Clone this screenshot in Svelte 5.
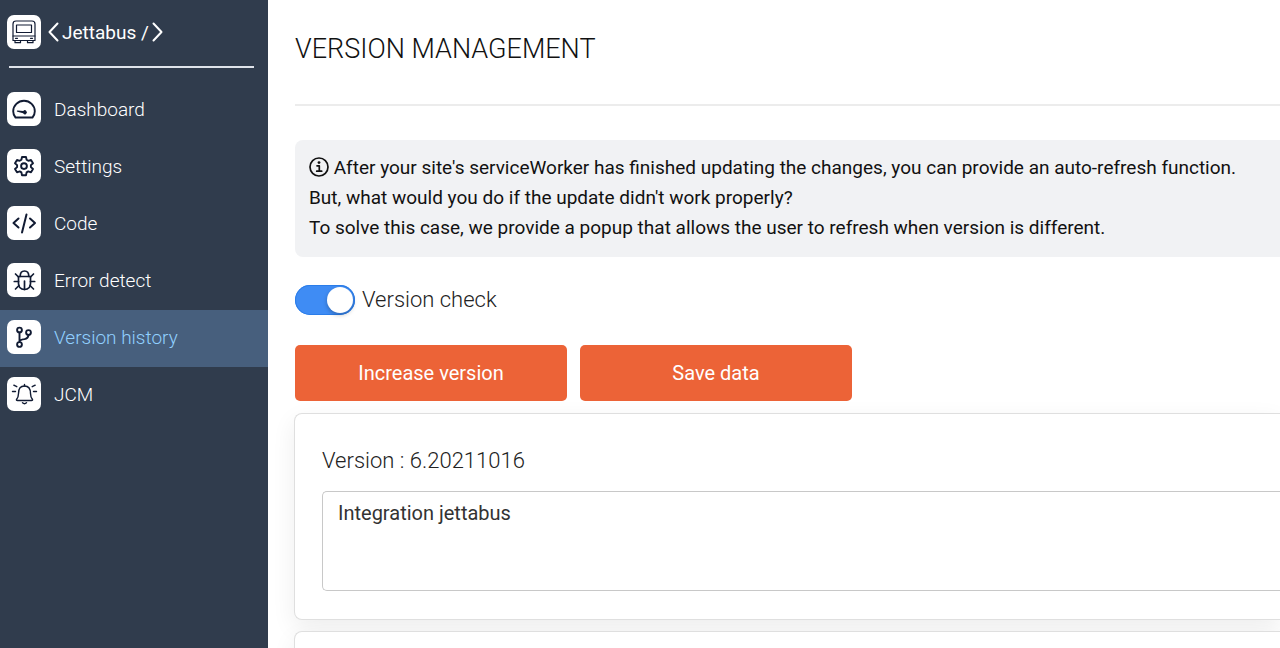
<script lang="ts">
  type Icon = 'dashboard' | 'settings' | 'code' | 'bug' | 'branch' | 'bell';

  interface MenuItem {
    icon: Icon;
    label: string;
    href: string;
  }

  interface Version {
    name: string;
    memo: string;
  }

  const menu: MenuItem[] = [
    { icon: 'dashboard', label: 'Dashboard', href: '#dashboard' },
    { icon: 'settings', label: 'Settings', href: '#settings' },
    { icon: 'code', label: 'Code', href: '#code' },
    { icon: 'bug', label: 'Error detect', href: '#error' },
    { icon: 'branch', label: 'Version history', href: '#version' },
    { icon: 'bell', label: 'JCM', href: '#jcm' },
  ];

  let current = $state('#version');
  let versionCheck = $state(true);
  let versions = $state<Version[]>([{ name: '6.20211016', memo: 'Integration jettabus' }]);

  function increaseVersion() {
    const [major, date] = versions[0].name.split('.');
    versions.unshift({ name: `${Number(major) + 1}.${date}`, memo: '' });
  }

  function saveData() {
    localStorage.setItem('versions', JSON.stringify(versions));
  }
</script>

<div class="layout">
  <aside class="sidebar">
    <div class="brand">
      <span class="tile">
        <svg viewBox="0 0 34 34">
          <g stroke-width="1.2">
            <path d="M6 25.500V9q0-3 3-3h16q3 0 3 3v16.500z" />
            <rect x="9.500" y="10" width="15" height="7.500" />
            <path d="M6 21h22M8 25.500v2.200h5.500v-2.200M20.500 25.500v2.200H26v-2.200M8.500 23.300h2M23.500 23.300h2" />
          </g>
        </svg>
      </span>
      <span class="brand-name">
        <svg class="angle" viewBox="0 0 11 20"><path d="M9.500 1.500 1.500 10l8 8.500" /></svg>
        <span>Jettabus /</span>
        <svg class="angle" viewBox="0 0 11 20"><path d="M1.500 1.500 9.500 10l-8 8.500" /></svg>
      </span>
    </div>

    <nav>
      {#each menu as item}
        <a
          href={item.href}
          class:active={current === item.href}
          onclick={() => (current = item.href)}
        >
          <span class="tile">
            <svg viewBox="0 0 34 34">
              {#if item.icon === 'dashboard'}
                <path stroke-width="1.900" d="M8.500 25.500h17q2.300-2.500 2.300-6.200a10.800 10.500 0 0 0-21.600 0q0 3.700 2.300 6.200z" />
                <path class="solid" d="m10.500 18.400 5.800.6a2 2 0 1 1-.2 2.300l-5.600-1.500a.7.700 0 0 1 0-1.400z" />
              {:else if item.icon === 'settings'}
                <path
                  stroke-width="1.900"
                  d="M15 8h4l.6 2.800 1.700 1 2.700-.9 2 3.300-2.100 1.900v2l2.100 1.900-2 3.300-2.700-.9-1.700 1L19 26.200h-4l-.6-2.800-1.700-1-2.700.9-2-3.300 2.100-1.900v-2L8 14.200l2-3.300 2.700.9 1.700-1z"
                />
                <circle stroke-width="1.900" cx="17" cy="17.100" r="2.900" />
              {:else if item.icon === 'code'}
                <path stroke-width="2" d="m11.500 12.500-5 4.500 5 4.500M23 12.500l5 4.500-5 4.500M19.500 8.500l-4.500 18" />
              {:else if item.icon === 'bug'}
                <g stroke-width="1.700">
                  <path d="M11.500 13.500h12v7q0 5.500-6 6-6-.5-6-6z" />
                  <path d="M13.200 13.300q0-5.300 4.300-5.300t4.300 5.300M17.500 18v8.500" />
                  <path d="m11.500 14-3-3M23.500 14l3-3M11.500 18.500H7.300M23.500 18.500h4.200M12 22.500l-3.500 3.500M23 22.500l3.500 3.500" />
                </g>
              {:else if item.icon === 'branch'}
                <g stroke-width="1.900">
                  <circle cx="12.500" cy="10" r="2.400" />
                  <circle cx="21.500" cy="12.500" r="2.400" />
                  <circle cx="12.500" cy="24.500" r="2.400" />
                  <path d="M12.500 12.400v9.700M21.500 14.900q-.3 3.600-4 4.200-5 .3-5 3" />
                </g>
              {:else}
                <g stroke-width="1.400">
                  <path d="M9.500 22.500q2-2.500 2-6 0-7.500 6-7.500t6 7.500q0 3.500 2 6 .4 1-1 1H10.500q-1.400 0-1-1z" />
                  <path d="M17.500 9V7.500M15.500 25.800q2 1.800 4 0M5.500 14.500h3M26.500 14.500h3M6.800 8.200l3 1.500M28.200 8.200l-3 1.500" />
                </g>
              {/if}
            </svg>
          </span>
          {item.label}
        </a>
      {/each}
    </nav>
  </aside>

  <main>
    <h1>VERSION MANAGEMENT</h1>

    <p class="notice">
      <svg class="info" viewBox="0 0 20 20">
        <circle cx="10" cy="10" r="9" />
        <path d="M8 8.800h2.300v5.200M7.700 14.200h5" />
        <circle class="dot" cx="10" cy="5.600" r="1.400" />
      </svg>
      After your site's serviceWorker has finished updating the changes, you can provide an auto-refresh function.<br />
      But, what would you do if the update didn't work properly?<br />
      To solve this case, we provide a popup that allows the user to refresh when version is different.
    </p>

    <label class="switch">
      <input type="checkbox" bind:checked={versionCheck} />
      Version check
    </label>

    <div class="actions">
      <button type="button" onclick={increaseVersion}>Increase version</button>
      <button type="button" onclick={saveData}>Save data</button>
    </div>

    {#each versions as version, i}
      <section class="card">
        <label for="memo-{i}">Version : {version.name}</label>
        <textarea id="memo-{i}" bind:value={version.memo}></textarea>
      </section>
    {/each}
    <section class="card"></section>
  </main>
</div>

<style>
  :global(body) {
    margin: 0;
    overflow: hidden;
    background: #fff;
  }

  .layout {
    display: flex;
    height: 100vh;
    font-family: Roboto, 'Liberation Sans', sans-serif;
    font-weight: 400;
  }

  .sidebar {
    flex: 0 0 268px;
    background: #303c4d;
    color: #fff;
    font-size: 19px;
  }

  .brand {
    position: relative;
    display: flex;
    align-items: center;
    gap: 7px;
    margin: 0 14px 12px 7px;
    padding: 15px 0 17px;
  }

  .brand::after {
    content: '';
    position: absolute;
    right: 0;
    bottom: -2px;
    left: 2px;
    height: 2px;
    background: #dfe3ea;
  }

  .brand-name {
    display: flex;
    align-items: center;
    gap: 3px;
  }

  .tile {
    flex: none;
    width: 34px;
    height: 34px;
    border-radius: 7px;
    background: #fff;
  }

  svg {
    display: block;
    fill: none;
    stroke: #111b33;
    stroke-linecap: round;
    stroke-linejoin: round;
  }

  .solid {
    fill: #111b33;
    stroke: none;
  }

  .angle {
    width: 11px;
    height: 20px;
    stroke: #fff;
    stroke-width: 2;
  }

  nav {
    padding-top: 4px;
  }

  nav a {
    display: flex;
    align-items: center;
    gap: 13px;
    box-sizing: border-box;
    height: 57px;
    padding: 0 0 3px 7px;
    color: #fff;
    font-weight: 300;
    text-decoration: none;
  }

  nav a.active {
    background: #475f7d;
    color: #91d0ff;
  }

  main {
    flex: 1;
    min-width: 0;
    padding-left: 27px;
    overflow: hidden;
    color: #111;
  }

  h1 {
    margin: 0 0 34px;
    padding: 32px 0 38px;
    border-bottom: 2px solid #ececec;
    font-size: 27px;
    font-weight: 300;
    line-height: 34px;
  }

  .notice {
    margin: 0 0 28px;
    padding: 13px 0 14px 14px;
    border-radius: 8px 0 0 8px;
    background: #f1f2f4;
    font-size: 19px;
    line-height: 30px;
    white-space: nowrap;
  }

  .info {
    display: inline-block;
    width: 20px;
    height: 20px;
    vertical-align: -3px;
    stroke: #111;
    stroke-width: 1.7;
  }

  .info .dot {
    fill: #111;
    stroke: none;
  }

  .switch {
    display: flex;
    align-items: center;
    gap: 7px;
    width: fit-content;
    color: #222;
    font-size: 22px;
    font-weight: 300;
    line-height: 30px;
  }

  .switch input {
    appearance: none;
    width: 60px;
    height: 30px;
    margin: 0;
    padding: 2px;
    border: 0;
    border-radius: 15px;
    background: #bbb;
    cursor: pointer;
  }

  .switch input::before {
    content: '';
    display: block;
    width: 26px;
    height: 26px;
    border-radius: 50%;
    background: #fff;
    box-shadow: 0 2px 4px rgba(0, 0, 0, 0.25);
  }

  .switch input:checked {
    background: #3f8cf4;
    box-shadow: inset 0 0 0 1px #2b7de9;
  }

  .switch input:checked::before {
    margin-left: 30px;
  }

  .actions {
    display: flex;
    gap: 13px;
    margin: 30px 0 12px;
  }

  .actions button {
    width: 272px;
    height: 56px;
    border: 0;
    border-radius: 5px;
    background: #ec6337;
    color: #fff;
    font-family: inherit;
    font-size: 20px;
    cursor: pointer;
  }

  .card {
    min-height: 150px;
    margin: 0 0 11px -1px;
    padding: 29px 0 26px 27px;
    border: 1px solid #dfdfdf;
    border-right: 0;
    border-radius: 8px 0 0 8px;
    background: #fff;
    box-shadow: 0 8px 24px rgba(0, 0, 0, 0.07);
  }

  .card label {
    display: block;
    margin-bottom: 12px;
    color: #222;
    font-size: 22px;
    font-weight: 300;
    line-height: 36px;
  }

  .card textarea {
    display: block;
    box-sizing: border-box;
    width: 100%;
    height: 100px;
    padding: 6px 15px;
    border: 1px solid #c8c8c8;
    border-right: 0;
    border-radius: 5px 0 0 5px;
    background: #fff;
    color: #333;
    font-family: inherit;
    font-size: 20px;
    line-height: 30px;
    resize: none;
  }
</style>
